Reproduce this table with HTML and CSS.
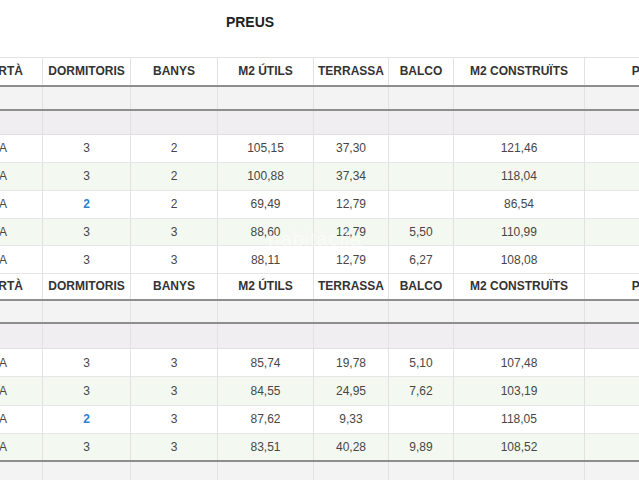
FILE: index.html
```html
<!DOCTYPE html>
<html lang="ca">
<head>
<meta charset="utf-8">
<title>Preus</title>
<link rel="stylesheet" href="styles.css">
</head>
<body>
<div class="page">
  <h1 class="title">PREUS</h1>
  <div class="sheet">
    <table class="grid">
      <colgroup>
        <col class="c1"><col class="c2"><col class="c3"><col class="c4"><col class="c5"><col class="c6"><col class="c7"><col class="c8">
      </colgroup>
      <tbody>
        <tr class="head first"><th>PORTÀ</th><th>DORMITORIS</th><th>BANYS</th><th>M2 ÚTILS</th><th>TERRASSA</th><th>BALCO</th><th>M2 CONSTRUÏTS</th><th>PREU</th></tr>
        <tr class="blank gray"><td></td><td></td><td></td><td></td><td></td><td></td><td></td><td></td></tr>
        <tr class="blank pink"><td></td><td></td><td></td><td></td><td></td><td></td><td></td><td></td></tr>
        <tr class="data"><td>1A</td><td>3</td><td>2</td><td>105,15</td><td>37,30</td><td></td><td>121,46</td><td></td></tr>
        <tr class="data alt"><td>2A</td><td>3</td><td>2</td><td>100,88</td><td>37,34</td><td></td><td>118,04</td><td></td></tr>
        <tr class="data"><td>3A</td><td><span class="hl">2</span></td><td>2</td><td>69,49</td><td>12,79</td><td></td><td>86,54</td><td></td></tr>
        <tr class="data alt"><td>4A</td><td>3</td><td>3</td><td>88,60</td><td>12,79</td><td>5,50</td><td>110,99</td><td></td></tr>
        <tr class="data"><td>5A</td><td>3</td><td>3</td><td>88,11</td><td>12,79</td><td>6,27</td><td>108,08</td><td></td></tr>
        <tr class="head second"><th>PORTÀ</th><th>DORMITORIS</th><th>BANYS</th><th>M2 ÚTILS</th><th>TERRASSA</th><th>BALCO</th><th>M2 CONSTRUÏTS</th><th>PREU</th></tr>
        <tr class="blank gray short"><td></td><td></td><td></td><td></td><td></td><td></td><td></td><td></td></tr>
        <tr class="blank pink tall"><td></td><td></td><td></td><td></td><td></td><td></td><td></td><td></td></tr>
        <tr class="data two"><td>1A</td><td>3</td><td>3</td><td>85,74</td><td>19,78</td><td>5,10</td><td>107,48</td><td></td></tr>
        <tr class="data two alt"><td>2A</td><td>3</td><td>3</td><td>84,55</td><td>24,95</td><td>7,62</td><td>103,19</td><td></td></tr>
        <tr class="data two"><td>3A</td><td><span class="hl">2</span></td><td>3</td><td>87,62</td><td>9,33</td><td></td><td>118,05</td><td></td></tr>
        <tr class="data two alt last"><td>4A</td><td>3</td><td>3</td><td>83,51</td><td>40,28</td><td>9,89</td><td>108,52</td><td></td></tr>
        <tr class="blank gray end"><td></td><td></td><td></td><td></td><td></td><td></td><td></td><td></td></tr>
      </tbody>
    </table>
    <div class="watermark">habitaclia</div>
  </div>
</div>
</body>
</html>
```

FILE: styles.css
```css
html, body {
  margin: 0;
  padding: 0;
  background: #ffffff;
  overflow: hidden;
}

.page {
  width: 639px;
  height: 480px;
  overflow: hidden;
  font-family: "Liberation Sans", Arial, sans-serif;
}

.title {
  margin: 14px 0 0 0;
  width: 500px;
  height: 16px;
  line-height: 16px;
  text-align: center;
  font-size: 14px;
  font-weight: bold;
  color: #222222;
}

.sheet {
  position: relative;
  margin-top: 27px;
}

.grid {
  margin-left: -39px;
  border-collapse: collapse;
  table-layout: fixed;
  width: 751px;
}

.c1 { width: 81px; }
.c2 { width: 88px; }
.c3 { width: 87px; }
.c4 { width: 96px; }
.c5 { width: 75px; }
.c6 { width: 65px; }
.c7 { width: 131px; }
.c8 { width: 128px; }

.grid th,
.grid td {
  padding: 0;
  text-align: center;
  white-space: nowrap;
  overflow: hidden;
  border-left: 1px solid #e2e2e2;
  border-right: 1px solid #e2e2e2;
}

.grid td:first-child {
  text-align: right;
  padding-right: 35px;
}

.grid th {
  font-size: 12px;
  font-weight: bold;
  color: #333333;
}

.grid td {
  font-size: 12px;
  color: #474747;
}

.head {
  background: #ffffff;
}

.head.first {
  height: 28px;
  border-top: 1px solid #e2e2e2;
  border-bottom: 2px solid #8e8e8e;
}

.head.second {
  height: 26px;
  border-bottom: 2px solid #8e8e8e;
}

.blank.gray {
  height: 24px;
  background: #f3f3f3;
  border-bottom: 2px solid #8e8e8e;
}

.blank.gray.short {
  height: 23px;
}

.blank.gray.end {
  height: 24px;
  border-bottom: none;
}

.blank.pink {
  height: 25px;
  background: #f0eef1;
  border-bottom: 1px solid #e0e0e0;
}

.blank.pink.tall {
  height: 26px;
}

.data {
  height: 27.85px;
  background: #ffffff;
  border-bottom: 1px solid #e6e6e6;
}

.data.two {
  height: 28.2px;
}

.data.alt {
  background: #f3f8f1;
}

.data.last {
  border-bottom: 2px solid #8e8e8e;
}

.hl {
  color: #2f80d0;
  font-weight: bold;
}

.watermark {
  position: absolute;
  left: 268px;
  top: 170px;
  font-family: "Liberation Sans", Arial, sans-serif;
  font-size: 21px;
  color: rgba(255, 255, 255, 0.5);
  letter-spacing: 0.5px;
  pointer-events: none;
}
```
